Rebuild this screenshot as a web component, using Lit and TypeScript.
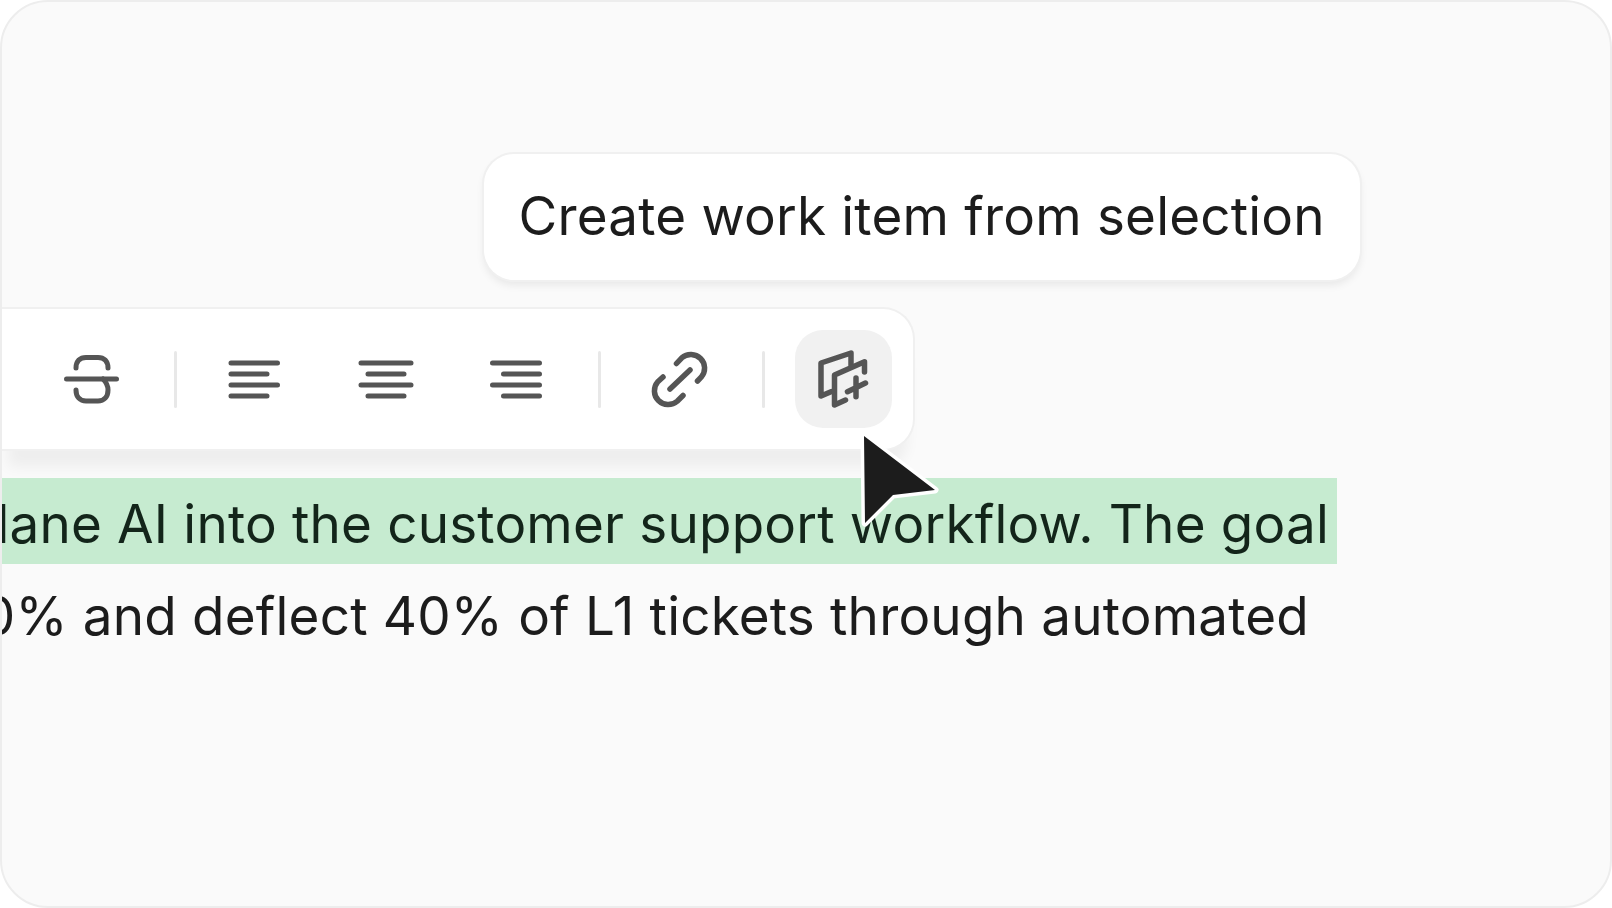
import { LitElement, html, css, svg } from "lit";
import { customElement } from "lit/decorators.js";

const icon = (body: unknown) => html`<svg viewBox="0 0 64 64" width="64" height="64" fill="none" stroke="#555" stroke-width="5" stroke-linecap="round" stroke-linejoin="round">${body}</svg>`;

const strike = svg`<path d="M6.500 32H56.500"/><path d="M16 21c0-7 4-10.500 10-10.500h12c6 0 10 3.500 10 10.500"/><path d="M16 43c0 7 4 11 10 11h12c6 0 10-4 10-11 0-4-2-8-5-11"/>`;
const alignLeft = svg`<path d="M8 16H54.500M8 27H44M8 38H54.500M8 49H44"/>`;
const alignCenter = svg`<path d="M7 16H57M14 27H50M7 38H57M14 49H50"/>`;
const alignRight = svg`<path d="M8.500 16H55.500M19.500 27H55.500M8.500 38H55.500M19.500 49H55.500"/>`;
const link = svg`<g stroke-width="5.500"><path d="M28.500 16.500 33.800 10.800A13.750 13.750 0 0 1 53.200 30.200L49.500 34"/><path d="M15 30 9.800 34.800A13.750 13.750 0 0 0 29.200 54.200L35 48.500"/><path d="M22 42 42 23"/></g>`;
const createItem = svg`<g stroke-width="5.500"><path d="M40 18V6L10 16V49L20 44.700"/><path d="M53.500 25V14.700L23.500 28V58L34.500 53"/><path d="M36.500 44.700 54.500 36M45 31V49.700"/></g>`;

@customElement("app-root")
export class AppRoot extends LitElement {
  static styles = css`
    :host {
      display: block;
      background: #fff;
      font-family: Inter, "Liberation Sans", sans-serif;
      color: #1c1c1c;
    }

    .card {
      position: relative;
      box-sizing: border-box;
      height: 908px;
      padding-top: 152px;
      border: 2px solid #ededed;
      border-radius: 48px;
      background: #fafafa;
      overflow: hidden;
      display: flex;
      flex-direction: column;
      align-items: flex-start;
    }

    .tooltip {
      margin-left: 482px;
      height: 126px;
      box-sizing: border-box;
      padding: 0 35.5px 2px 34.5px;
      display: flex;
      align-items: center;
      background: #fff;
      border-radius: 30px;
      box-shadow: 0 0 0 2px #f0f0f0, 0 5px 8px rgba(0, 0, 0, 0.08);
      font-size: 53px;
      letter-spacing: 0.19px;
      white-space: nowrap;
    }

    .toolbar {
      margin-top: 29px;
      display: flex;
      align-items: center;
      gap: 33.5px;
      padding: 21px 21.5px 21px 41px;
      background: #fff;
      border-radius: 0 30px 30px 0;
      box-shadow: 0 0 0 2px #f0f0f0, 0 24px 14px -6px rgba(0, 0, 0, 0.05);
    }

    .btn {
      width: 97px;
      height: 98px;
      border-radius: 28px;
      display: flex;
      align-items: center;
      justify-content: center;
    }

    .btn.active {
      background: #f1f1f1;
    }

    .sep {
      width: 3px;
      height: 57px;
      margin-right: -3.5px;
      border-radius: 2px;
      background: #e8e8e8;
    }

    .line {
      display: flex;
      justify-content: flex-end;
      align-items: center;
      white-space: nowrap;
      overflow: hidden;
      font-size: 53px;
      letter-spacing: 0.19px;
    }

    .line.selected {
      margin-top: 29px;
      width: 1335px;
      height: 86px;
      padding: 6px 8px 0 0;
      box-sizing: border-box;
      background: #c6ebd0;
      color: #13251a;
    }

    .line.plain {
      width: 1307px;
      height: 98px;
      padding-top: 6px;
      box-sizing: border-box;
    }

    .cursor {
      position: absolute;
      left: 854px;
      top: 426px;
    }
  `;

  render() {
    return html`
      <div class="card">
        <div class="tooltip">Create work item from selection</div>
        <div class="toolbar">
          <div class="btn">${icon(strike)}</div>
          <div class="sep"></div>
          <div class="btn">${icon(alignLeft)}</div>
          <div class="btn">${icon(alignCenter)}</div>
          <div class="btn">${icon(alignRight)}</div>
          <div class="sep"></div>
          <div class="btn">${icon(link)}</div>
          <div class="sep"></div>
          <div class="btn active">${icon(createItem)}</div>
        </div>
        <div class="line selected">Plane AI into the customer support workflow. The goal</div>
        <div class="line plain">30% and deflect 40% of L1 tickets through automated</div>
        <svg class="cursor" width="96" height="112" viewBox="0 0 96 112">
          <path d="M8 8 79 62 37 67 9 95Z" fill="#1c1c1c" stroke="#fff" stroke-width="7" stroke-linejoin="round" paint-order="stroke"/>
        </svg>
      </div>
    `;
  }
}
